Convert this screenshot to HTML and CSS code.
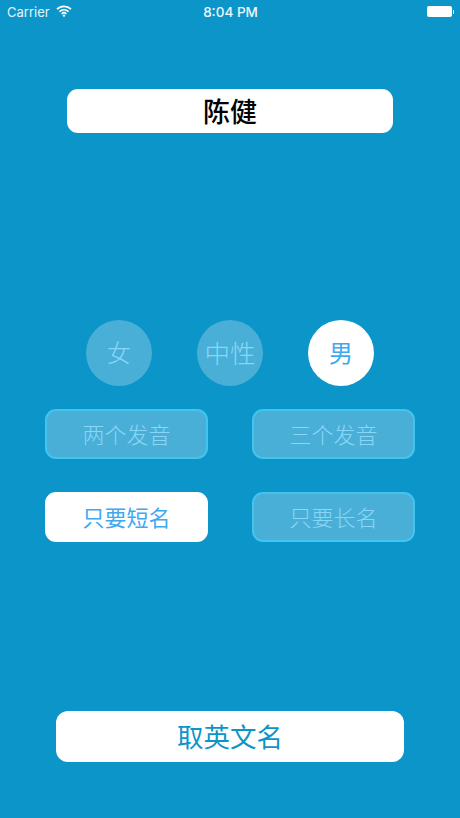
FILE: index.html
```html
<!doctype html>
<html lang="zh-CN">
<head>
  <meta charset="utf-8" />
  <meta name="viewport" content="width=device-width,initial-scale=1" />
  <title>取英文名</title>
  <link rel="stylesheet" href="styles.css">
</head>

<body>
<div class="status">
  <div class="statusLeft">
    <span>Carrier</span>
    <svg class="wifi" width="16" height="12" viewBox="0 0 16 12">
      <path d="M1 4.2a10 10 0 0 1 14 0" />
      <path d="M3.4 6.6a6.6 6.6 0 0 1 9.2 0" />
      <path d="M5.7 8.8a3.3 3.3 0 0 1 4.6 0" />
      <circle cx="8" cy="10.6" r="1.2" />
    </svg>
  </div>
  <div class="time">8:04 PM</div>
  <div class="battery"><div class="batteryBody"></div><div class="batteryTip"></div></div>
</div>

<div class="name"><span>陈健</span></div>

<div class="gender">
  <div class="circle"><span>女</span></div>
  <div class="circle wide"><span>中性</span></div>
  <div class="circle on"><span>男</span></div>
</div>

<div class="options">
  <div class="opt"><span>两个发音</span></div>
  <div class="opt"><span>三个发音</span></div>
  <div class="opt on"><span>只要短名</span></div>
  <div class="opt"><span>只要长名</span></div>
</div>

<button class="go">取英文名</button>
</body>
</html>
```

FILE: styles.css
```css
:root{
  --bg:#0c95c9;
  --blue:#3fa9f0;
  --dim:rgba(255,255,255,.25);
  --dimText:#8ad6f8;
  --border:#42c4ee;
}

*{box-sizing:border-box}
html,body{height:100%}
body{
  margin:0;
  width:460px;
  height:818px;
  overflow:hidden;
  background:var(--bg);
  font-family:"Noto Sans CJK SC","Liberation Sans",sans-serif;
  display:flex;
  flex-direction:column;
  align-items:center;
}

/* status bar */
.status{
  width:100%;
  height:24px;
  padding:0 6px 0 7px;
  display:grid;
  grid-template-columns:1fr auto 1fr;
  align-items:center;
  color:#fff;
  font-family:Inter,"Liberation Sans",sans-serif;
  flex:none;
}
.statusLeft{display:flex;align-items:center;gap:6px;font-size:13px;color:#e4f4fb}
.wifi{margin-top:-3px}
.wifi path{fill:none;stroke:#fff;stroke-width:1.7}
.wifi circle{fill:#fff}
.time{font-weight:500;font-size:13.5px;color:#eef8fc}
.battery{display:flex;align-items:center;justify-content:flex-end;margin-top:-1px}
.batteryBody{width:25px;height:11px;background:#fff;border-radius:2px}
.batteryTip{width:1.5px;height:4px;background:#d5eef8;margin-left:1px}

/* name */
.name{
  margin-top:65px;
  width:326px;
  height:44px;
  background:#fff;
  border-radius:11px;
  color:#000;
  font-size:27px;
  font-weight:500;
  display:flex;
  align-items:center;
  justify-content:center;
  flex:none;
}
.name span{margin-top:-1px}

/* gender */
.gender{
  margin-top:187px;
  display:flex;
  gap:45px;
  flex:none;
}
.circle{
  width:66px;
  height:66px;
  border-radius:50%;
  background:var(--dim);
  color:var(--dimText);
  font-size:24px;
  font-weight:300;
  line-height:1;
  display:flex;
  align-items:center;
  justify-content:center;
}
.circle span{margin-top:-2px}
.circle.wide{font-size:25.5px}
.circle.on{background:#fff;color:var(--blue);font-weight:400}

/* options */
.options{
  margin-top:23px;
  width:370px;
  display:grid;
  grid-template-columns:163px 163px;
  justify-content:space-between;
  row-gap:33px;
  flex:none;
}
.opt{
  height:50px;
  border:2px solid var(--border);
  border-radius:11px;
  background:var(--dim);
  color:var(--dimText);
  font-size:22px;
  font-weight:300;
  display:flex;
  align-items:center;
  justify-content:center;
}
.opt span{margin-top:-3px}
.opt.on{background:#fff;border-color:#fff;color:var(--blue);font-weight:400}

/* bottom */
.go{
  margin-top:169px;
  width:348px;
  height:51px;
  border:none;
  border-radius:12px;
  background:#fff;
  color:#0c95c9;
  font-family:inherit;
  font-size:26.5px;
  padding:0 0 2px;
  flex:none;
}
```
